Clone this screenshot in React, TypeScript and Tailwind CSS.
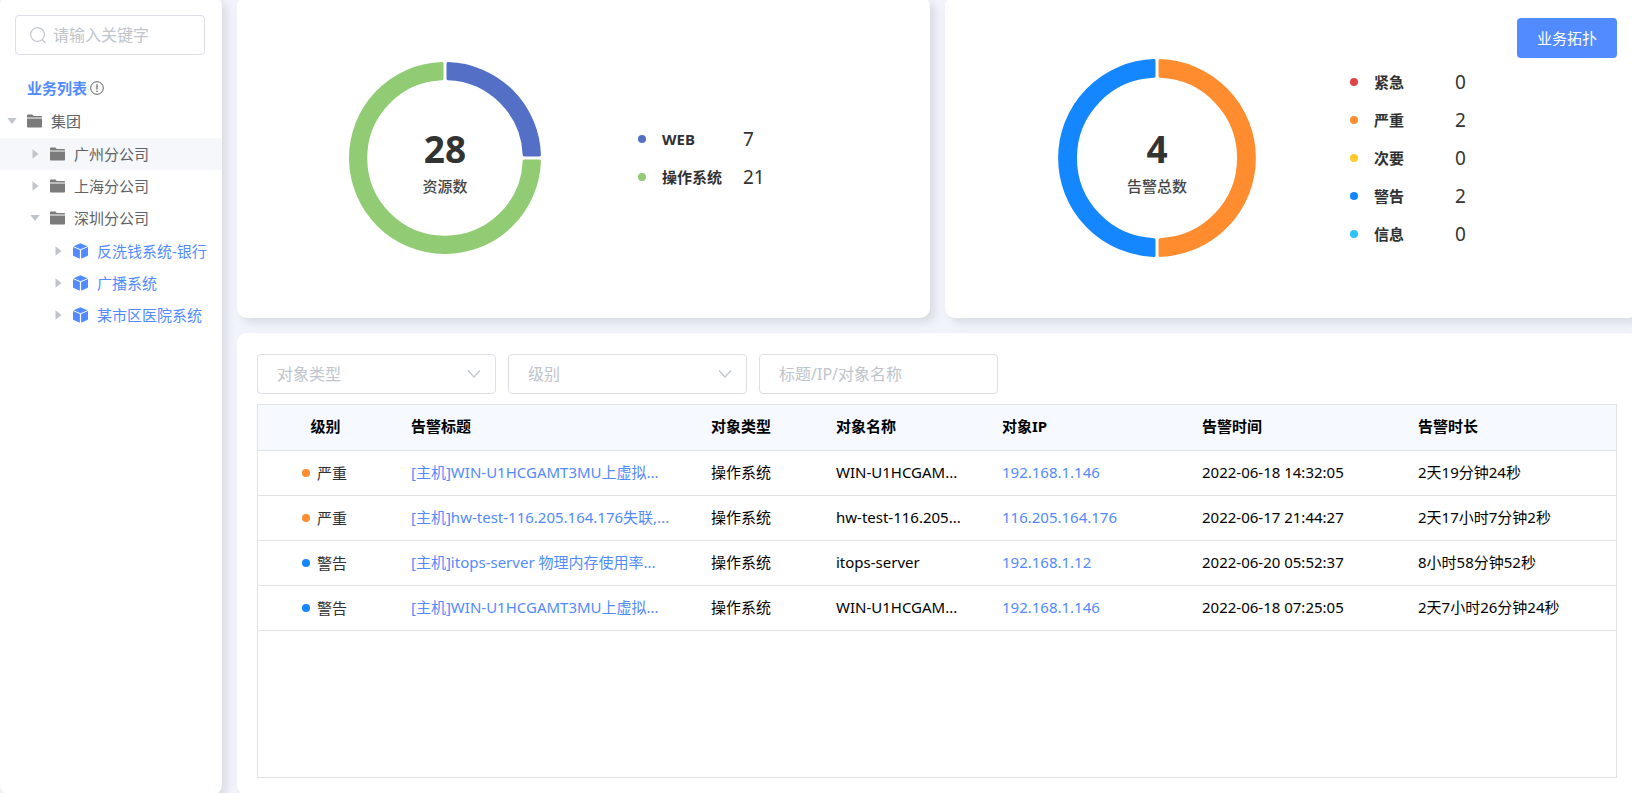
import { useState } from "react";

const niveis = [
    { nome: "紧急", total: 0, cor: "bg-[#e04545]" },
    { nome: "严重", total: 2, cor: "bg-[#ff8d30]" },
    { nome: "次要", total: 0, cor: "bg-[#ffca28]" },
    { nome: "警告", total: 2, cor: "bg-[#1487ff]" },
    { nome: "信息", total: 0, cor: "bg-[#2bc4f5]" },
];

const recursos = [
    { nome: "WEB", total: 7, cor: "bg-[#5470c6]" },
    { nome: "操作系统", total: 21, cor: "bg-[#91cc75]" },
];

const alarmes = [
    { nivel: "严重", cor: "bg-[#ff8d30]", titulo: "[主机]WIN-U1HCGAMT3MU上虚拟...", tipo: "操作系统", nome: "WIN-U1HCGAM...", ip: "192.168.1.146", hora: "2022-06-18 14:32:05", duracao: "2天19分钟24秒" },
    { nivel: "严重", cor: "bg-[#ff8d30]", titulo: "[主机]hw-test-116.205.164.176失联,...", tipo: "操作系统", nome: "hw-test-116.205...", ip: "116.205.164.176", hora: "2022-06-17 21:44:27", duracao: "2天17小时7分钟2秒" },
    { nivel: "警告", cor: "bg-[#1487ff]", titulo: "[主机]itops-server 物理内存使用率...", tipo: "操作系统", nome: "itops-server", ip: "192.168.1.12", hora: "2022-06-20 05:52:37", duracao: "8小时58分钟52秒" },
    { nivel: "警告", cor: "bg-[#1487ff]", titulo: "[主机]WIN-U1HCGAMT3MU上虚拟...", tipo: "操作系统", nome: "WIN-U1HCGAM...", ip: "192.168.1.146", hora: "2022-06-18 07:25:05", duracao: "2天7小时26分钟24秒" },
];

type No = {
    nome: string
    aberto?: boolean
    ativo?: boolean
    filhos?: No[]
}

const arvore: No[] = [
    {
        nome: "集团",
        aberto: true,
        filhos: [
            { nome: "广州分公司", ativo: true },
            { nome: "上海分公司" },
            {
                nome: "深圳分公司",
                aberto: true,
                filhos: [
                    { nome: "反洗钱系统-银行" },
                    { nome: "广播系统" },
                    { nome: "某市区医院系统" },
                ],
            },
        ],
    },
];

const recuos = ["pl-0", "pl-[23px]", "pl-[46px]"]

function Pasta() {
    return (
        <svg className="shrink-0" width="15" height="14" viewBox="0 0 15 14" fill="#7b7b7b">
            <path d="M0 1.4Q0 .5.9.5H5.2L6.8 2H14.2Q15 2 15 2.8V3.5H0Z" />
            <path d="M0 4.6H15V12.6Q15 13.5 14.1 13.5H.9Q0 13.5 0 12.6Z" />
        </svg>
    )
}

function Cubo() {
    return (
        <svg className="shrink-0" width="15" height="16" viewBox="0 0 15 16" fill="#528bff">
            <path d="M7.5.2 14.5 3.2 7.5 6.2.5 3.2Z" />
            <path d="M0 4.1 6.9 7.1V15.8L.6 12.9Q0 12.6 0 12Z" />
            <path d="M15 4.1 8.1 7.1V15.8L14.4 12.9Q15 12.6 15 12Z" />
        </svg>
    )
}

function Seta({ aberto }: { aberto?: boolean }) {
    return (
        <svg width="10" height="10" viewBox="0 0 10 10" fill="#c0c4cc">
            {aberto ? <path d="M.3 2H9.7L5 8Z" /> : <path d="M2.5 .3V9.7L8.5 5Z" />}
        </svg>
    )
}

function Chevron() {
    return (
        <svg className="pointer-events-none absolute top-3 right-3.5" width="16" height="16" viewBox="0 0 16 16" fill="none" stroke="#c0c4cc" strokeWidth="1.2">
            <path d="M2 4.5 8 11 14 4.5" />
        </svg>
    )
}

function Ramo({ nos, nivel }: { nos: No[], nivel: number }) {
    return (
        <ul className="pt-px">
            {nos.map((no) => (
                <li key={no.nome}>
                    <div className={`flex h-8 items-center ${recuos[nivel]} ${no.ativo ? "bg-[#f5f7fa]" : ""}`}>
                        <button className="mr-1 flex w-[23px] shrink-0 justify-center" type="button" aria-label={no.nome}>
                            <Seta aberto={no.aberto} />
                        </button>
                        {nivel < 2 ? <Pasta /> : <Cubo />}
                        {nivel < 2
                            ? <span className="ml-[9px] whitespace-nowrap text-[#606266]">{no.nome}</span>
                            : <a href="#" className="ml-[9px] whitespace-nowrap text-[#528bff]">{no.nome}</a>}
                    </div>
                    {no.filhos && <Ramo nos={no.filhos} nivel={nivel + 1} />}
                </li>
            ))}
        </ul>
    )
}

// Fatia do anel: de a até b em frações da volta, começando no topo
function fatia(raio: number, a: number, b: number) {
    const arco = 1.5
    const fora = raio - arco
    const dentro = raio * 0.81 + arco
    const folga = 3

    const ponto = (r: number, t: number, sinal: number) => {
        const angulo = t * 2 * Math.PI - Math.PI / 2 + sinal * Math.asin(folga / r)
        return `${(raio + r * Math.cos(angulo)).toFixed(2)} ${(raio + r * Math.sin(angulo)).toFixed(2)}`
    }

    const grande = b - a > 0.5 ? 1 : 0
    return `M${ponto(fora, a, 1)}A${fora} ${fora} 0 ${grande} 1 ${ponto(fora, b, -1)}L${ponto(dentro, b, -1)}A${dentro} ${dentro} 0 ${grande} 0 ${ponto(dentro, a, 1)}Z`
}

type AnelProps = {
    raio: number
    total: number
    rotulo: string
    partes: { a: number, b: number, cor: string }[]
}

function Anel({ raio, total, rotulo, partes }: AnelProps) {
    return (
        <svg className="shrink-0" width={raio * 2} height={raio * 2} role="img" aria-label={rotulo}>
            {partes.map((p) => (
                <path key={p.cor} d={fatia(raio, p.a, p.b)} fill={p.cor} stroke={p.cor} strokeWidth="3" strokeLinejoin="round" />
            ))}
            <text x={raio} y={raio + 5} textAnchor="middle" fontSize="37" fontWeight="700" fill="#333">{total}</text>
            <text x={raio} y={raio + 34} textAnchor="middle" fontSize="15" fontWeight="500" fill="#464646">{rotulo}</text>
        </svg>
    )
}

function Legenda({ itens }: { itens: { nome: string, total: number, cor: string }[] }) {
    return (
        <ul>
            {itens.map((item) => (
                <li key={item.nome} className="flex h-[38px] items-center">
                    <span className={`mr-4 size-2 rounded-full ${item.cor}`} />
                    <span className="w-[81px] text-[15px] font-bold text-[#303133]">{item.nome}</span>
                    <span className="text-[19px] text-[#333]">{item.total}</span>
                </li>
            ))}
        </ul>
    )
}

export default function App() {

    const [ busca, setBusca ] = useState('');
    const [ tipo, setTipo ] = useState('');
    const [ nivel, setNivel ] = useState('');
    const [ texto, setTexto ] = useState('');

    const painel = "rounded-[10px] bg-white shadow-[5px_5px_10px_rgba(0,0,0,0.1)]"
    const campo = "h-10 w-[239px] rounded border border-[#dcdfe6] bg-white px-[19px] text-base placeholder:text-[#c0c4cc] outline-none"

    return (
        <div className="flex min-h-screen gap-[15px] overflow-hidden bg-[#f1f5fb] font-['Noto_Sans','Noto_Sans_CJK_SC',sans-serif] text-[15px] leading-5">

            <aside className={`-mt-1 -mb-0.5 w-[222px] shrink-0 pt-[19px] ${painel}`}>
                <div className="mr-[17px] ml-[15px] flex h-10 items-center gap-1.5 rounded border border-[#dcdfe6] px-3.5">
                    <svg className="shrink-0" width="17" height="17" viewBox="0 0 17 17" fill="none" stroke="#c0c4cc" strokeWidth="1.2">
                        <circle cx="7.5" cy="7.5" r="6.9" />
                        <path d="M12.1 12.6 15.5 16" />
                    </svg>
                    <input
                        className="w-full min-w-0 text-base outline-none placeholder:text-[#c0c4cc]"
                        aria-label="请输入关键字"
                        placeholder="请输入关键字"
                        value={busca}
                        onChange={(event) => setBusca(event.target.value)}
                    />
                </div>

                <h2 className="mt-[23px] mb-1.5 flex items-center gap-[3px] pl-[27px] font-bold text-[#528bff]">
                    业务列表
                    <svg width="14" height="14" viewBox="0 0 14 14" fill="none" stroke="#606266">
                        <circle cx="7" cy="7" r="6.3" />
                        <path d="M7 3.2V8.4M7 9.6V11" strokeWidth="1.2" />
                    </svg>
                </h2>

                <Ramo nos={arvore} nivel={0} />
            </aside>

            <main className="-mt-1 -mr-1.5 -mb-0.5 flex min-w-0 flex-1 flex-col gap-[15px]">

                <div className="grid grid-cols-2 gap-[15px]">
                    <section className={`flex min-h-[322px] items-center gap-[97px] pt-0.5 pl-28 ${painel}`}>
                        <Anel raio={96} total={28} rotulo="资源数" partes={[
                            { a: 0, b: 0.25, cor: "#5470c6" },
                            { a: 0.25, b: 1, cor: "#91cc75" },
                        ]} />
                        <Legenda itens={recursos} />
                    </section>

                    <section className={`flex min-h-[322px] items-center justify-between pt-0.5 pr-[21px] pl-[113px] ${painel}`}>
                        <div className="flex items-center gap-[94px]">
                            <Anel raio={99} total={4} rotulo="告警总数" partes={[
                                { a: 0, b: 0.5, cor: "#ff8d30" },
                                { a: 0.5, b: 1, cor: "#1487ff" },
                            ]} />
                            <Legenda itens={niveis} />
                        </div>
                        <button className="mt-5 h-10 w-[100px] shrink-0 self-start rounded bg-[#528bff] text-white" type="button">业务拓扑</button>
                    </section>
                </div>

                <section className={`flex flex-1 flex-col pt-[21px] pr-[21px] pb-[17px] pl-5 ${painel}`}>
                    <form className="mb-2.5 flex gap-3">
                        <div className="relative">
                            <select className={`appearance-none text-[#c0c4cc] ${campo}`} aria-label="对象类型" value={tipo} onChange={(event) => setTipo(event.target.value)}>
                                <option value="">对象类型</option>
                                <option value="os">操作系统</option>
                                <option value="web">WEB</option>
                            </select>
                            <Chevron />
                        </div>
                        <div className="relative">
                            <select className={`appearance-none text-[#c0c4cc] ${campo}`} aria-label="级别" value={nivel} onChange={(event) => setNivel(event.target.value)}>
                                <option value="">级别</option>
                                {niveis.map((n) => <option key={n.nome}>{n.nome}</option>)}
                            </select>
                            <Chevron />
                        </div>
                        <input
                            className={campo}
                            aria-label="标题/IP/对象名称"
                            placeholder="标题/IP/对象名称"
                            value={texto}
                            onChange={(event) => setTexto(event.target.value)}
                        />
                    </form>

                    <div className="flex-1 border border-[#e2e2e2]">
                        <table className="w-full table-fixed text-left whitespace-nowrap text-black">
                            <colgroup>
                                <col className="w-[143px]" />
                                <col className="w-[300px]" />
                                <col className="w-[125px]" />
                                <col className="w-[166px]" />
                                <col className="w-[200px]" />
                                <col className="w-[216px]" />
                                <col />
                            </colgroup>
                            <thead>
                                <tr className="h-[45px] border-b border-[#e2e2e2] bg-[#f6f9ff]">
                                    <th className="pr-2 pb-0.5 text-center">级别</th>
                                    <th className="px-2.5 pb-0.5">告警标题</th>
                                    <th className="px-2.5 pb-0.5">对象类型</th>
                                    <th className="px-2.5 pb-0.5">对象名称</th>
                                    <th className="px-2.5 pb-0.5">对象IP</th>
                                    <th className="px-2.5 pb-0.5">告警时间</th>
                                    <th className="px-2.5 pb-0.5">告警时长</th>
                                </tr>
                            </thead>
                            <tbody>
                                {alarmes.map((alarme) => (
                                    <tr key={alarme.hora} className="h-[45px] border-b border-[#e2e2e2]">
                                        <td className="pr-2.5">
                                            <span className="flex items-center justify-center gap-[7px] text-[#303133]">
                                                <i className={`size-2 rounded-full ${alarme.cor}`} />
                                                {alarme.nivel}
                                            </span>
                                        </td>
                                        <td className="px-2.5 pb-0.5"><a className="text-[#528bff]" href="#">{alarme.titulo}</a></td>
                                        <td className="px-2.5 pb-0.5">{alarme.tipo}</td>
                                        <td className="px-2.5 pb-0.5">{alarme.nome}</td>
                                        <td className="px-2.5 pb-0.5"><a className="text-[#528bff]" href="#">{alarme.ip}</a></td>
                                        <td className="px-2.5 pb-0.5">{alarme.hora}</td>
                                        <td className="px-2.5 pb-0.5">{alarme.duracao}</td>
                                    </tr>
                                ))}
                            </tbody>
                        </table>
                    </div>
                </section>
            </main>
        </div>
    )
}
